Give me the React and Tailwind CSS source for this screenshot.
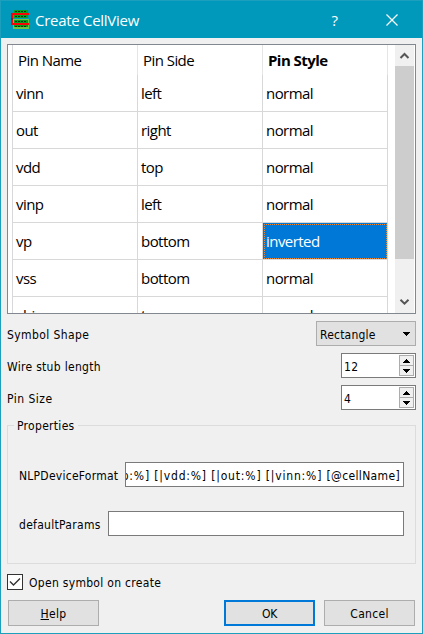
import React from "react";

const ROWS = [
  ["vinn", "left", "normal"],
  ["out", "right", "normal"],
  ["vdd", "top", "normal"],
  ["vinp", "left", "normal"],
  ["vp", "bottom", "inverted"],
  ["vss", "bottom", "normal"],
  ["vbias", "top", "normal"],
];

function ChipIcon() {
  return (
    <svg width="20" height="19" viewBox="0 0 20 19" shapeRendering="crispEdges" className="block shrink-0">
      <rect x="3" y="0" width="14" height="8" fill="#0aa022" />
      <rect x="2" y="9" width="16" height="10" fill="#6cc644" />
      <rect x="3" y="10" width="14" height="7" fill="#0a9a20" />
      <path d="M4 1.5h12M4 6.5h12M4 11.5h12M4 16.5h12" stroke="#053c0c" strokeWidth="1" strokeDasharray="2 1" />
      <path d="M18 4H1v10h17" fill="none" stroke="#fa0505" strokeWidth="2" />
      <rect x="0" y="8" width="2" height="2" fill="#8b2020" />
    </svg>
  );
}

function Chevron({ down }) {
  return (
    <svg width="19" height="21" viewBox="0 0 19 21" className="block">
      <path d={down ? "M5.5 7.7 9.5 11.7 13.5 7.7" : "M5.5 13 9.5 9 13.5 13"} fill="none" stroke="#555" strokeWidth="2" />
    </svg>
  );
}

function SpinBox({ value }) {
  return (
    <div className="flex h-[25px] w-[75px] items-center border border-[#7a7a7a] bg-white pr-px">
      <span className="flex-1 pt-[2px] pl-[2px]">{value}</span>
      <div className="flex h-[21px] w-[15px] flex-col border border-[#acacac] bg-[#f0f0f0]">
        <div className="flex h-[9px] items-center justify-center">
          <svg width="7" height="4" shapeRendering="crispEdges"><path d="M3 0h1v1h1v1h1v1h1v1H0V3h1V2h1V1h1z" /></svg>
        </div>
        <div className="h-px bg-[#acacac]" />
        <div className="flex h-[9px] items-center justify-center">
          <svg width="7" height="4" shapeRendering="crispEdges"><path d="M0 0h7v1H6v1H5v1H4v1H3V3H2V2H1V1H0z" /></svg>
        </div>
      </div>
    </div>
  );
}

function Cell({ text, selected }) {
  return (
    <div
      className={
        "flex h-[37px] w-[125px] shrink-0 items-center border-r border-b border-[#d8d8d8] pl-[3px] " +
        (selected ? "bg-[#0078d7] text-white outline-1 outline-dotted outline-[#e88a3c] -outline-offset-2" : "")
      }
    >
      {text}
    </div>
  );
}

export default function App() {
  return (
    <div className="flex h-[634px] w-[423px] flex-col overflow-hidden border border-[#1c9fbd] bg-[#f0f0f0] font-['DejaVu_Sans_Condensed','DejaVu_Sans',sans-serif] text-[12px] leading-[16px] tracking-[0.3px] text-black">
      <header className="flex h-[37px] shrink-0 items-center bg-[#0099bc] font-['Open_Sans',sans-serif] text-white">
        <div className="pl-[10px]"><ChipIcon /></div>
        <span className="flex-1 pl-[4px] text-[15px] leading-5 tracking-[-0.28px]">Create CellView</span>
        <span className="mr-[48px] text-[15px] leading-5 tracking-normal">?</span>
        <svg width="12" height="12" viewBox="0 0 12 12" className="mr-[24px]"><path d="M.5.5l11 11M11.5.5l-11 11" stroke="white" strokeWidth="1.2" /></svg>
      </header>

      <div className="mt-[6px] ml-[6px] flex h-[270px] w-[409px] shrink-0 border border-[#828790] bg-white pl-[4px]">
        <div className="h-[268px] w-[376px] overflow-hidden border-l border-[#d8d8d8] font-['Open_Sans',sans-serif] text-[15px] leading-5 tracking-[-0.55px]">
          <div className="flex h-[30px]">
            <div className="flex w-[125px] items-center border-r border-[#e5e5e5] pl-[5px]">Pin Name</div>
            <div className="flex w-[125px] items-center border-r border-[#e5e5e5] pl-[5px]">Pin Side</div>
            <div className="flex w-[125px] items-center border-r border-[#e5e5e5] pl-[5px] font-bold">Pin Style</div>
          </div>
          {ROWS.map((row, i) => (
            <div key={row[0]} className="flex">
              {row.map((text, c) => <Cell key={c} text={text} selected={i === 4 && c === 2} />)}
            </div>
          ))}
        </div>
        <div className="ml-[7px] flex w-[19px] flex-col bg-[#f0f0f0]">
          <Chevron />
          <div className="h-[193px] bg-[#cdcdcd]" />
          <div className="flex-1" />
          <Chevron down />
        </div>
      </div>

      <div className="mt-[7px] flex h-[25px] items-center justify-between px-[6px]">
        <span className="pt-[2px] tracking-[0.4px]">Symbol Shape</span>
        <div className="flex h-[25px] w-[100px] items-center justify-between border border-[#adadad] bg-[#e1e1e1] pr-[5px] pl-[3px]">
          <span className="pt-[2px] tracking-[0.2px]">Rectangle</span>
          <svg width="7" height="4" shapeRendering="crispEdges"><path d="M0 0h7v1H6v1H5v1H4v1H3V3H2V2H1V1H0z" /></svg>
        </div>
      </div>
      <div className="mt-[7px] flex h-[25px] items-center justify-between px-[6px]">
        <span className="pt-[2px]">Wire stub length</span>
        <SpinBox value="12" />
      </div>
      <div className="mt-[7px] flex h-[25px] items-center justify-between px-[6px]">
        <span className="pt-[2px] tracking-[0.5px]">Pin Size</span>
        <SpinBox value="4" />
      </div>

      <fieldset className="mx-[6px] mt-[7px] h-[147px] border border-[#dcdcdc] pr-[11px] pl-[11px]">
        <legend className="-ml-[5px] h-[16px] px-[3px] leading-[18px]">Properties</legend>
        <div className="mt-[29px] flex h-[25px] items-center">
          <span className="w-[106px] shrink-0 pt-[2px] tracking-[0.25px]">NLPDeviceFormat</span>
          <div className="flex h-[25px] w-[279px] items-center justify-end overflow-hidden border border-[#7a7a7a] bg-white pt-[2px] pr-[3px] whitespace-nowrap">
            <span className="tracking-[0.83px]">p:%] [|vdd:%] [|out:%] [|vinn:%]&nbsp;</span>
            <span className="tracking-[0.35px]">[@cellName]</span>
          </div>
        </div>
        <div className="mt-[24px] flex h-[25px] items-center">
          <span className="w-[89px] shrink-0 pt-[2px]">defaultParams</span>
          <div className="h-[25px] w-[296px] border border-[#7a7a7a] bg-white" />
        </div>
      </fieldset>

      <div className="mt-[10px] flex h-[16px] items-center pl-[6px]">
        <div className="flex h-[16px] w-[16px] items-center justify-center border border-[#333] bg-white">
          <svg width="12" height="10" viewBox="0 0 12 10"><path d="M1 4.5 4.5 8 11 1.5" fill="none" stroke="#333" strokeWidth="1.4" /></svg>
        </div>
        <span className="pt-[2px] pl-[6px]">Open symbol on create</span>
      </div>

      <div className="mt-[10px] flex h-[26px] pr-[7px] pl-[7px]">
        <button className="h-[26px] w-[91px] border border-[#adadad] bg-[#e1e1e1] pt-[2px]"><span className="underline">H</span>elp</button>
        <button className="ml-auto h-[26px] w-[91px] border-2 border-[#0078d7] bg-[#e1e1e1] pt-[2px] tracking-[-0.3px]">OK</button>
        <button className="ml-[9px] h-[26px] w-[91px] border border-[#adadad] bg-[#e1e1e1] pt-[2px]">Cancel</button>
      </div>
    </div>
  );
}
